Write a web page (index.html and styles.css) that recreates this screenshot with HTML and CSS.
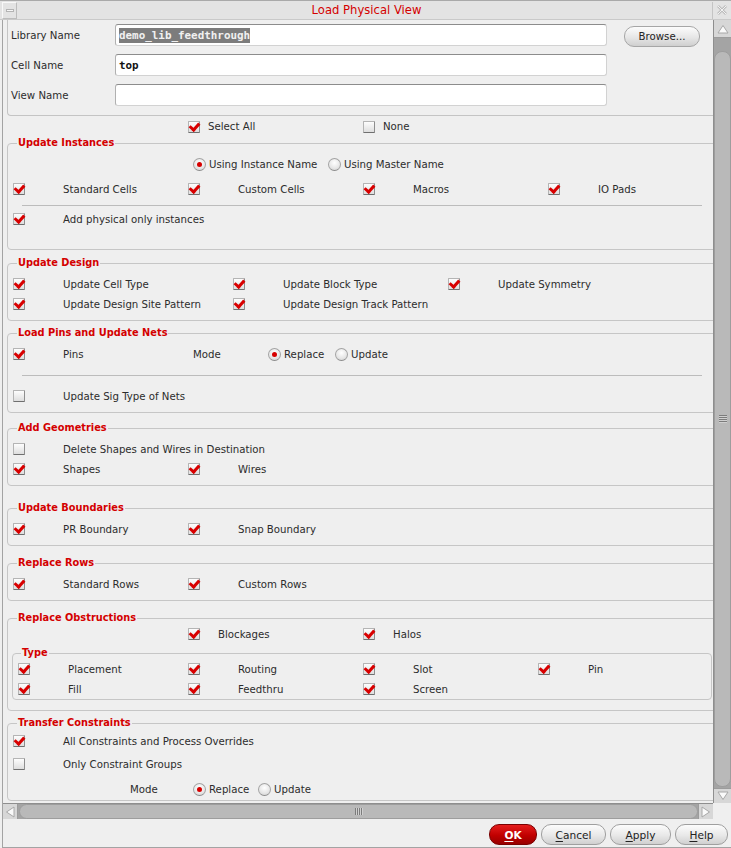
FILE: index.html
```html
<!DOCTYPE html>
<html>
<head>
<meta charset="utf-8">
<link rel="stylesheet" href="styles.css">
</head>
<body>
<div class="win">
  <div class="titlebar">
    <div class="tb-btn tb-min"><span class="minbar"></span></div>
    <div class="title">Load Physical View</div>
    <div class="tb-btn tb-close"><svg width="12" height="12" viewBox="0 0 12 12"><path d="M2 2 L10 10 M10 2 L2 10" stroke="#bdbdbd" stroke-width="2.6" fill="none"/><path d="M2 2 L10 10 M10 2 L2 10" stroke="#f2f2f2" stroke-width="1" fill="none"/></svg></div>
  </div>
  <div class="frame">
    <div class="main">
      <div class="viewport">
        <div class="content">
          <div class="form">
            <div class="frow">
              <div class="flabel">Library Name</div>
              <div class="input"><span class="sel">demo_lib_feedthrough</span></div>
              <div class="browse">Browse...</div>
            </div>
            <div class="frow">
              <div class="flabel">Cell Name</div>
              <div class="input">top</div>
            </div>
            <div class="frow">
              <div class="flabel">View Name</div>
              <div class="input"></div>
            </div>
          </div>
          <div class="selrow">
            <div class="cell c175"><span class="cb on"></span><span class="g8">Select All</span></div>
            <div class="cell"><span class="cb"></span><span class="g8">None</span></div>
          </div>

          <fieldset class="grp pb20">
            <legend>Update Instances</legend>
            <div class="r mt5 pl185">
              <div class="cell c135"><span class="rb on"></span><span class="g4">Using Instance Name</span></div>
              <div class="cell"><span class="rb"></span><span class="g4">Using Master Name</span></div>
            </div>
            <div class="r mt5">
              <div class="cell c175"><span class="cb on"></span><span class="g38">Standard Cells</span></div>
              <div class="cell c175"><span class="cb on"></span><span class="g38">Custom Cells</span></div>
              <div class="cell c185"><span class="cb on"></span><span class="g38">Macros</span></div>
              <div class="cell"><span class="cb on"></span><span class="g38">IO Pads</span></div>
            </div>
            <div class="sep mt6"></div>
            <div class="r mt3">
              <div class="cell"><span class="cb on"></span><span class="g38">Add physical only instances</span></div>
            </div>
          </fieldset>

          <fieldset class="grp mtg7 pb6">
            <legend>Update Design</legend>
            <div class="r mt5">
              <div class="cell c220"><span class="cb on"></span><span class="g38">Update Cell Type</span></div>
              <div class="cell c215"><span class="cb on"></span><span class="g38">Update Block Type</span></div>
              <div class="cell"><span class="cb on"></span><span class="g38">Update Symmetry</span></div>
            </div>
            <div class="r">
              <div class="cell c220"><span class="cb on"></span><span class="g38">Update Design Site Pattern</span></div>
              <div class="cell"><span class="cb on"></span><span class="g38">Update Design Track Pattern</span></div>
            </div>
          </fieldset>

          <fieldset class="grp mtg6 pb6">
            <legend>Load Pins and Update Nets</legend>
            <div class="r mt5">
              <div class="cell c180"><span class="cb on"></span><span class="g38">Pins</span></div>
              <div class="cell c75">Mode</div>
              <div class="cell c67"><span class="rb on"></span><span class="g4">Replace</span></div>
              <div class="cell"><span class="rb"></span><span class="g4">Update</span></div>
            </div>
            <div class="sep mt11"></div>
            <div class="r mt10">
              <div class="cell"><span class="cb"></span><span class="g38">Update Sig Type of Nets</span></div>
            </div>
          </fieldset>

          <fieldset class="grp mtg9 pb6">
            <legend>Add Geometries</legend>
            <div class="r mt5">
              <div class="cell"><span class="cb"></span><span class="g38">Delete Shapes and Wires in Destination</span></div>
            </div>
            <div class="r">
              <div class="cell c175"><span class="cb on"></span><span class="g38">Shapes</span></div>
              <div class="cell"><span class="cb on"></span><span class="g38">Wires</span></div>
            </div>
          </fieldset>

          <fieldset class="grp mtg16 pb6">
            <legend>Update Boundaries</legend>
            <div class="r mt5">
              <div class="cell c175"><span class="cb on"></span><span class="g38">PR Boundary</span></div>
              <div class="cell"><span class="cb on"></span><span class="g38">Snap Boundary</span></div>
            </div>
          </fieldset>

          <fieldset class="grp mtg11 pb6">
            <legend>Replace Rows</legend>
            <div class="r mt5">
              <div class="cell c175"><span class="cb on"></span><span class="g38">Standard Rows</span></div>
              <div class="cell"><span class="cb on"></span><span class="g38">Custom Rows</span></div>
            </div>
          </fieldset>

          <fieldset class="grp mtg11 pb10">
            <legend>Replace Obstructions</legend>
            <div class="r pl180">
              <div class="cell c175"><span class="cb on"></span><span class="g18">Blockages</span></div>
              <div class="cell"><span class="cb on"></span><span class="g18">Halos</span></div>
            </div>
            <fieldset class="grp inner">
              <legend>Type</legend>
              <div class="r">
                <div class="cell c170"><span class="cb on"></span><span class="g38">Placement</span></div>
                <div class="cell c175"><span class="cb on"></span><span class="g38">Routing</span></div>
                <div class="cell c175"><span class="cb on"></span><span class="g38">Slot</span></div>
                <div class="cell"><span class="cb on"></span><span class="g38">Pin</span></div>
              </div>
              <div class="r">
                <div class="cell c170"><span class="cb on"></span><span class="g38">Fill</span></div>
                <div class="cell c175"><span class="cb on"></span><span class="g38">Feedthru</span></div>
                <div class="cell"><span class="cb on"></span><span class="g38">Screen</span></div>
              </div>
            </fieldset>
          </fieldset>

          <fieldset class="grp mtg6 pb1">
            <legend>Transfer Constraints</legend>
            <div class="r mt2">
              <div class="cell"><span class="cb on"></span><span class="g38">All Constraints and Process Overrides</span></div>
            </div>
            <div class="r mt3">
              <div class="cell"><span class="cb"></span><span class="g38">Only Constraint Groups</span></div>
            </div>
            <div class="r mt5 pl122">
              <div class="cell c63">Mode</div>
              <div class="cell c65"><span class="rb on"></span><span class="g4">Replace</span></div>
              <div class="cell"><span class="rb"></span><span class="g4">Update</span></div>
            </div>
          </fieldset>
        </div>
      </div>
      <div class="vscroll">
        <div class="arrow v-up"><svg width="12" height="10" viewBox="0 0 12 10"><path d="M1 9 L6 1.5 L11 9 Z" fill="#fafafa" stroke="#a8a8a8" stroke-width="1"/></svg></div>
        <div class="vthumb"><span class="grip-v"></span></div>
        <div class="arrow v-down"><svg width="12" height="10" viewBox="0 0 12 10"><path d="M1 1 L6 8.5 L11 1 Z" fill="#fafafa" stroke="#a8a8a8" stroke-width="1"/></svg></div>
      </div>
    </div>
    <div class="hrow">
      <div class="hscroll">
        <div class="arrow h-left"><svg width="10" height="12" viewBox="0 0 10 12"><path d="M9 1 L1.5 6 L9 11 Z" fill="#fafafa" stroke="#a8a8a8" stroke-width="1"/></svg></div>
        <div class="hthumb"><span class="grip-h"></span></div>
        <div class="arrow h-right"><svg width="10" height="12" viewBox="0 0 10 12"><path d="M1 1 L8.5 6 L1 11 Z" fill="#fafafa" stroke="#a8a8a8" stroke-width="1"/></svg></div>
      </div>
      <div class="corner"></div>
    </div>
    <div class="btnbar">
      <div class="btn ok"><u>O</u>K</div>
      <div class="btn cancel"><u>C</u>ancel</div>
      <div class="btn apply"><u>A</u>pply</div>
      <div class="btn help"><u>H</u>elp</div>
    </div>
  </div>
</div>
</body>
</html>
```

FILE: styles.css
```css
* { box-sizing: border-box; }
html, body { margin: 0; padding: 0; background: #efefef; }
body {
  font-family: "DejaVu Sans", "Noto Sans", sans-serif;
  font-size: 10.2px;
  color: #2c2c2c;
}
.win { width: 731px; height: 848px; display: flex; flex-direction: column; overflow: hidden; }

/* title bar */
.titlebar {
  height: 20px;
  display: flex;
  align-items: center;
  background: #e3e3e3;
  border-top: 1px solid #a9a9a9;
  border-bottom: 1px solid #c9c9c9;
}
.tb-btn { height: 17px; display: flex; align-items: center; justify-content: center; }
.tb-min { width: 15px; margin-left: 2px; border: 1px solid #bcbcbc; border-top-color: #f8f8f8; border-left-color: #f8f8f8; }
.minbar { width: 8px; height: 3px; background: #f6f6f6; border: 1px solid #b3b3b3; }
.title { flex: 1; text-align: center; color: #d40000; font-size: 11.6px; padding-left: 4px; }
.tb-close { width: 19px; border-left: 1px solid #c4c4c4; }

/* body frame */
.frame { flex: 1; display: flex; flex-direction: column; margin-left: 2px; border-left: 1px solid #a3a3a3; border-bottom: 1px solid #a3a3a3; }
.main { display: flex; height: 783px; }
.viewport { width: 710px; height: 783px; overflow: hidden; }
.content { width: 760px; }

/* top form */
.form {
  margin-left: 4px;
  height: 96px;
  padding-top: 4px;
  border-left: 1px solid #c4c4c4;
  border-bottom: 1px solid #c4c4c4;
  border-bottom-left-radius: 4px;
}
.frow { display: flex; align-items: center; height: 22px; margin-bottom: 8px; }
.flabel { width: 107px; padding-left: 3px; }
.input {
  width: 492px;
  height: 22px;
  background: #fff;
  border: 1px solid #d2d2d2;
  border-top-color: #8c8c8c;
  border-left-color: #b0b0b0;
  border-radius: 3px;
  padding-left: 3px;
  display: flex;
  align-items: center;
  font-family: "DejaVu Sans Mono", "Liberation Mono", monospace;
  font-size: 10.9px;
  font-weight: bold;
  color: #111;
}
.sel { background: #7c7c7c; color: #f0f0f0; line-height: 15px; }
.browse {
  margin-left: 17px;
  margin-top: 3px;
  width: 76px;
  height: 21px;
  border: 1px solid #a6a6a6;
  border-radius: 10px;
  background: linear-gradient(#fcfcfc, #e6e6e6 55%, #cfcfcf);
  display: flex;
  align-items: center;
  justify-content: center;
  color: #222;
}

.selrow { height: 21px; display: flex; align-items: center; padding-left: 185px; }

/* groups */
fieldset.grp {
  margin: 0 0 0 4px;
  padding: 0;
  width: 750px;
  min-width: 0;
  border: 1px solid #c6c6c6;
  border-radius: 4px;
}
fieldset.grp legend {
  margin-left: 9px;
  padding: 0 1px;
  font-weight: bold;
  color: #d40000;
  font-size: 9.8px;
  line-height: 12px;
}
fieldset.inner { margin: 3px 0 0 4px; width: 700px; }
fieldset.inner legend { margin-left: 8px; }

.mtg6 { margin-top: 6px !important; }
.mtg7 { margin-top: 7px !important; }
.mtg9 { margin-top: 9px !important; }
.mtg11 { margin-top: 11px !important; }
.mtg16 { margin-top: 16px !important; }
.pb1 { padding-bottom: 1px !important; }
.pb6 { padding-bottom: 6px !important; }
.pb10 { padding-bottom: 10px !important; }
.pb20 { padding-bottom: 20px !important; }

.r { display: flex; align-items: center; height: 20px; padding-left: 5px; }
.mt2 { margin-top: 2px; }
.mt3 { margin-top: 3px; }
.mt5 { margin-top: 5px; }
.mt6 { margin-top: 6px; }
.mt10 { margin-top: 10px; }
.mt11 { margin-top: 11px; }
.pl122 { padding-left: 122px; }
.pl180 { padding-left: 180px; }
.pl185 { padding-left: 185px; }

.cell { display: flex; align-items: center; flex: none; white-space: nowrap; }
.c63 { width: 63px; }
.c65 { width: 65px; }
.c67 { width: 67px; }
.c75 { width: 75px; }
.c135 { width: 135px; }
.c170 { width: 170px; }
.c175 { width: 175px; }
.c180 { width: 180px; }
.c185 { width: 185px; }
.c215 { width: 215px; }
.c220 { width: 220px; }
.g4 { margin-left: 3px; }
.g8 { margin-left: 8px; }
.g18 { margin-left: 18px; }
.g38 { margin-left: 38px; }

.sep { margin-left: 14px; width: 680px; height: 1px; background: #bcbcbc; }

/* checkbox */
.cb {
  width: 12px;
  height: 12px;
  flex: none;
  border: 1px solid #b4b4b4;
  border-bottom-color: #6f6f6f;
  border-right-color: #8e8e8e;
  border-radius: 1px;
  background: linear-gradient(#fdfdfd, #dedede);
  display: flex;
  justify-content: center;
}
.cb.on::after {
  content: "";
  width: 4px;
  height: 7px;
  margin-top: -1px;
  margin-left: 1px;
  border: solid #d80000;
  border-width: 0 3px 3px 0;
  transform: rotate(42deg);
}

/* radio */
.rb {
  width: 13px;
  height: 13px;
  flex: none;
  border-radius: 50%;
  border: 1px solid #a3a3a3;
  border-bottom-color: #8a8a8a;
  background: radial-gradient(circle at 50% 35%, #ffffff, #e6e6e6 60%, #c8c8c8);
  display: flex;
  align-items: center;
  justify-content: center;
}
.rb.on::after {
  content: "";
  width: 5px;
  height: 5px;
  border-radius: 50%;
  background: #d60000;
}

/* scrollbars */
.vscroll {
  width: 18px;
  display: flex;
  flex-direction: column;
  background: #a4a4a4;
  border-left: 1px solid #8e8e8e;
}
.arrow { display: flex; align-items: center; justify-content: center; background: #d7d7d7; flex: none; }
.v-up { height: 18px; border-bottom: 1px solid #9c9c9c; }
.v-down { height: 15px; border-top: 1px solid #9c9c9c; }
.vthumb {
  flex: 1;
  margin: 13px 0 1px 0;
  border-radius: 8px;
  background: #b9b9b9;
  border: 1px solid #9d9d9d;
  display: flex;
  align-items: center;
  justify-content: center;
}
.grip-v {
  width: 8px;
  height: 8px;
  background: repeating-linear-gradient(#7c7c7c 0 1px, #d0d0d0 1px 2px);
}
.hrow { height: 16px; display: flex; }
.hscroll { width: 710px; display: flex; background: #a4a4a4; border-top: 1px solid #8e8e8e; }
.h-left { width: 15px; border-right: 1px solid #9c9c9c; }
.h-right { width: 15px; border-left: 1px solid #9c9c9c; }
.hthumb {
  flex: 1;
  margin: 0 0 0 1px;
  border-radius: 8px;
  background: #b9b9b9;
  border: 1px solid #9d9d9d;
  display: flex;
  align-items: center;
  justify-content: center;
}
.grip-h {
  width: 8px;
  height: 7px;
  background: repeating-linear-gradient(90deg, #7c7c7c 0 1px, #d0d0d0 1px 2px);
}
.corner { flex: 1; background: #efefef; }

/* buttons */
.btnbar { flex: 1; display: flex; justify-content: flex-end; align-items: flex-start; padding: 5px 3px 0 0; gap: 4px; }
.btn {
  height: 21px;
  border-radius: 10px;
  border: 1px solid #9f9f9f;
  background: linear-gradient(#fcfcfc, #e8e8e8 55%, #d0d0d0);
  display: flex;
  align-items: center;
  justify-content: center;
  font-size: 10.6px;
  color: #222;
}
.btn u { text-underline-offset: 2px; }
.ok { width: 48px; background: linear-gradient(#e41c1c, #c00000 55%, #980000); border-color: #7a0000; color: #fff; font-weight: bold; }
.cancel { width: 65px; }
.apply { width: 61px; }
.help { width: 53px; }
```
